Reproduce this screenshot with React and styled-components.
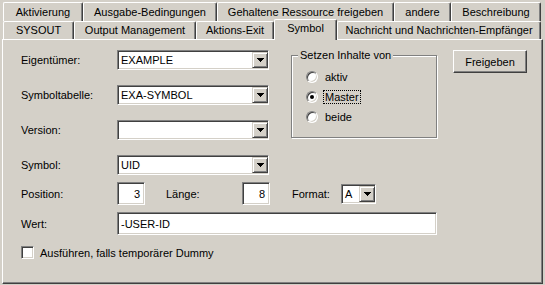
import React from 'react'
import styled, { createGlobalStyle } from 'styled-components'

const face = '#d4d0c8'
const shadow = '#808080'
const dark = '#404040'

const Global = createGlobalStyle`
html, body {
  margin: 0;
  padding: 0;
  background: ${face};
}
* { box-sizing: border-box; }
body {
  font-family: "Liberation Sans", Arial, sans-serif;
  font-size: 11px;
  color: #000;
}
`

const Window = styled.div`
width: 545px;
height: 285px;
background: ${face};
padding: 2px 2px 0 2px;
display: flex;
flex-direction: column;
`

const TabRow = styled.div`
display: flex;
height: ${p => p.$h}px;
padding-left: 1px;
`

const Tab = styled.div`
width: ${p => p.$w}px;
height: 100%;
display: flex;
align-items: center;
justify-content: center;
padding-bottom: 1px;
border-top: 1px solid #fff;
border-left: 1px solid #fff;
border-right: 1px solid ${dark};
box-shadow: inset -1px 0 ${shadow};
border-radius: 2px 2px 0 0;
white-space: nowrap;
`

const ActiveTab = styled(Tab)`
position: relative;
z-index: 2;
height: 21px;
margin-top: -2px;
background: ${face};
padding-bottom: 4px;
`

const Panel = styled.div`
width: 541px;
height: 245px;
border-top: 1px solid #fff;
border-left: 1px solid #fff;
border-right: 1px solid ${dark};
border-bottom: 1px solid ${dark};
box-shadow: inset -1px -1px ${shadow};
padding: 10px 0 0 18px;
display: flex;
flex-direction: column;
`

const Top = styled.div`
display: flex;
align-items: flex-start;
`

const FieldColumn = styled.div`
width: 248px;
display: flex;
flex-direction: column;
gap: 15px;
`

const Row = styled.div`
display: flex;
align-items: center;
height: ${p => p.$h || 20}px;
margin-top: ${p => p.$mt || 0}px;
`

const Label = styled.span`
width: ${p => p.$w || 96}px;
flex-shrink: 0;
white-space: nowrap;
`

const Sunken = styled.div`
width: ${p => p.$w}px;
height: ${p => p.$h || 20}px;
background: #fff;
border-top: 1px solid ${shadow};
border-left: 1px solid ${shadow};
border-right: 1px solid #fff;
border-bottom: 1px solid #fff;
box-shadow: inset 1px 1px ${dark}, inset -1px -1px ${face};
display: flex;
align-items: center;
justify-content: ${p => (p.$right ? 'flex-end' : 'flex-start')};
padding: 2px ${p => (p.$right ? 4 : 2)}px 2px 3px;
white-space: nowrap;
flex-shrink: 0;
`

const ComboText = styled.span`
flex: 1;
`

const DropButton = styled.div`
width: 16px;
height: 16px;
background: ${face};
border-top: 1px solid ${face};
border-left: 1px solid ${face};
border-right: 1px solid ${dark};
border-bottom: 1px solid ${dark};
box-shadow: inset 1px 1px #fff, inset -1px -1px ${shadow};
display: flex;
align-items: center;
justify-content: center;
margin-right: -2px;
flex-shrink: 0;
`

const Arrow = () => (
  <svg width="7" height="4" viewBox="0 0 7 4" shapeRendering="crispEdges">
    <polygon points="0,0 7,0 3.5,4" fill="#000" />
  </svg>
)

const Combo = ({ w, value }) => (
  <Sunken $w={w}>
    <ComboText>{value}</ComboText>
    <DropButton><Arrow /></DropButton>
  </Sunken>
)

const GroupBox = styled.div`
position: relative;
width: 146px;
height: 83px;
margin: 5px 0 0 22px;
border: 1px solid ${shadow};
box-shadow: inset 1px 1px #fff, 1px 1px #fff;
padding: 11px 0 0 14px;
display: flex;
flex-direction: column;
`

const Legend = styled.span`
position: absolute;
top: -7px;
left: 6px;
background: ${face};
padding: 0 2px;
white-space: nowrap;
`

const RadioRow = styled.div`
display: flex;
align-items: center;
height: 20px;
gap: 5px;
`

const RadioCircle = styled.span`
width: 12px;
height: 12px;
border-radius: 50%;
background: #fff;
border: 1px solid;
border-color: ${shadow} #fff #fff ${shadow};
box-shadow: inset 1px 1px ${dark}, inset -1px -1px ${face};
display: flex;
align-items: center;
justify-content: center;
&::after {
  content: '';
  width: 4px;
  height: 4px;
  border-radius: 50%;
  background: ${p => (p.$checked ? '#000' : 'transparent')};
}
`

const RadioText = styled.span`
padding: 0 1px;
border: 1px ${p => (p.$focus ? 'dotted #000' : 'solid transparent')};
`

const Button = styled.div`
width: 74px;
height: 23px;
margin-left: 16px;
display: flex;
align-items: center;
justify-content: center;
border-top: 1px solid #fff;
border-left: 1px solid #fff;
border-right: 1px solid ${dark};
border-bottom: 1px solid ${dark};
box-shadow: inset -1px -1px ${shadow};
`

const Gap = styled.span`
width: ${p => p.$w}px;
flex-shrink: 0;
`

const CheckBox = styled.span`
width: 13px;
height: 13px;
background: #fff;
border-top: 1px solid ${shadow};
border-left: 1px solid ${shadow};
border-right: 1px solid #fff;
border-bottom: 1px solid #fff;
box-shadow: inset 1px 1px ${dark}, inset -1px -1px ${face};
margin-right: 6px;
flex-shrink: 0;
`

const backTabs = [
  ['Aktivierung', 80],
  ['Ausgabe-Bedingungen', 134],
  ['Gehaltene Ressource freigeben', 177],
  ['andere', 57],
  ['Beschreibung', 90],
]

const frontTabs = [
  ['SYSOUT', 71],
  ['Output Management', 122],
  ['Aktions-Exit', 78],
  ['Symbol', 63, true],
  ['Nachricht und Nachrichten-Empfänger', 204],
]

const radios = [
  ['aktiv', false],
  ['Master', true],
  ['beide', false],
]

export default function App() {
  return (
    <Window>
      <Global />
      <TabRow $h={19}>
        {backTabs.map(([t, w]) => <Tab key={t} $w={w}>{t}</Tab>)}
      </TabRow>
      <TabRow $h={18}>
        {frontTabs.map(([t, w, active]) =>
          active
            ? <ActiveTab key={t} $w={w}>{t}</ActiveTab>
            : <Tab key={t} $w={w}>{t}</Tab>
        )}
      </TabRow>
      <Panel>
        <Top>
          <FieldColumn>
            <Row><Label>Eigentümer:</Label><Combo w={152} value="EXAMPLE" /></Row>
            <Row><Label>Symboltabelle:</Label><Combo w={152} value="EXA-SYMBOL" /></Row>
            <Row><Label>Version:</Label><Combo w={152} value="" /></Row>
          </FieldColumn>
          <GroupBox>
            <Legend>Setzen Inhalte von</Legend>
            {radios.map(([t, checked]) => (
              <RadioRow key={t}>
                <RadioCircle $checked={checked} />
                <RadioText $focus={checked}>{t}</RadioText>
              </RadioRow>
            ))}
          </GroupBox>
          <Button>Freigeben</Button>
        </Top>
        <Row $mt={15}><Label>Symbol:</Label><Combo w={152} value="UID" /></Row>
        <Row $mt={7} $h={23}>
          <Label>Position:</Label>
          <Sunken $w={28} $h={23} $right>3</Sunken>
          <Gap $w={21} />
          <Label $w={76}>Länge:</Label>
          <Sunken $w={28} $h={23} $right>8</Sunken>
          <Gap $w={22} />
          <Label $w={49}>Format:</Label>
          <Combo w={35} value="A" />
        </Row>
        <Row $mt={7} $h={23}>
          <Label>Wert:</Label>
          <Sunken $w={320} $h={23}>-USER-ID</Sunken>
        </Row>
        <Row $mt={11} $h={13}>
          <CheckBox />
          <span>Ausführen, falls temporärer Dummy</span>
        </Row>
      </Panel>
    </Window>
  )
}
